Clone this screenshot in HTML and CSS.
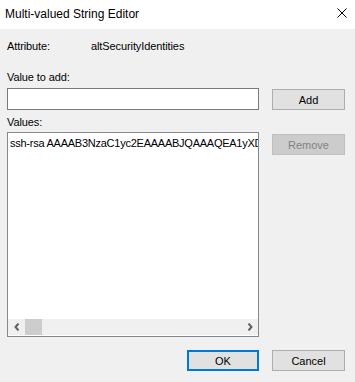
FILE: index.html
```html
<!DOCTYPE html>
<html lang="en">
  <head>
    <meta charset="UTF-8" />
    <title>Multi-valued String Editor</title>
    <link rel="stylesheet" href="styles.css">
  </head>
  <body>
    <div class="dialog" role="dialog" aria-label="Multi-valued String Editor">
      <header class="titlebar">
        <span class="title-text">Multi-valued String Editor</span>
        <button class="close-btn" type="button" aria-label="Close">
          <svg width="10" height="10" viewBox="0 0 10 10" aria-hidden="true">
            <path d="M0.5 0.5 L9.5 9.5 M9.5 0.5 L0.5 9.5" stroke="#000" stroke-width="1" fill="none" />
          </svg>
        </button>
      </header>

      <main class="content">
        <div class="attr-row">
          <span class="attr-label">Attribute:</span>
          <span class="attr-value">altSecurityIdentities</span>
        </div>

        <label class="field-label" for="value-input">Value to add:</label>
        <div class="edit-row">
          <input id="value-input" class="text-input" type="text" />
          <button class="btn add-btn" type="button">Add</button>
        </div>

        <div class="field-label values-label">Values:</div>
        <div class="edit-row values-row">
          <div class="listbox" role="listbox">
            <ul class="items">
              <li>ssh-rsa AAAAB3NzaC1yc2EAAAABJQAAAQEA1yXD</li>
            </ul>
            <!-- horizontal scrollbar -->
            <div class="hscroll" aria-hidden="true">
              <span class="arrow">
                <svg width="6" height="8" viewBox="0 0 6 8"><path d="M4.5 0.5 L1.5 4 L4.5 7.5" stroke="#606060" stroke-width="2" fill="none" /></svg>
              </span>
              <span class="thumb"></span>
              <span class="track"></span>
              <span class="arrow">
                <svg width="6" height="8" viewBox="0 0 6 8"><path d="M1.5 0.5 L4.5 4 L1.5 7.5" stroke="#606060" stroke-width="2" fill="none" /></svg>
              </span>
            </div>
          </div>
          <button class="btn remove-btn" type="button" disabled>Remove</button>
        </div>

        <div class="actions">
          <button class="btn ok-btn" type="button">OK</button>
          <button class="btn cancel-btn" type="button">Cancel</button>
        </div>
      </main>
    </div>
  </body>
</html>
```

FILE: styles.css
```css
/* Windows dialog look */
:root {
  --face: #f0f0f0;
  --btn-bg: #e1e1e1;
  --btn-border: #adadad;
  --field-border: #7a7a7a;
  --list-border: #828790;
  --accent: #0078d7;
}
* {
  box-sizing: border-box;
}
body {
  margin: 0;
  padding: 0;
  font-family: "Liberation Sans", Arial, sans-serif;
  font-size: 11px;
  letter-spacing: -0.1px;
  color: #000;
  background: var(--face);
}
.dialog {
  width: 355px;
  height: 382px;
  background: var(--face);
  overflow: hidden;
}

/* Title bar */
.titlebar {
  height: 29px;
  background: #fff;
  display: flex;
  align-items: center;
  padding-left: 5px;
}
.title-text {
  flex-grow: 1;
  font-size: 12px;
  letter-spacing: 0;
  padding-bottom: 2px;
}
.close-btn {
  background: none;
  border: none;
  width: 27px;
  height: 29px;
  padding: 0 0 3px 0;
  display: flex;
  align-items: center;
  justify-content: center;
}

/* Body */
.content {
  padding: 11px 10px 0 7px;
}
.attr-row {
  display: flex;
  height: 13px;
  line-height: 13px;
}
.attr-label {
  width: 84px;
}
.field-label {
  display: block;
  height: 13px;
  line-height: 13px;
  margin-top: 18px;
}
.values-label {
  margin-top: 6px;
}
.edit-row {
  display: flex;
  gap: 13px;
  align-items: flex-start;
  margin-top: 4px;
}
.values-row {
  margin-top: 3px;
}
.text-input {
  width: 252px;
  height: 22px;
  margin: 0;
  border: 1px solid var(--field-border);
  background: #fff;
  font: inherit;
  padding: 0 3px;
}

/* Buttons */
.btn {
  width: 73px;
  height: 21px;
  margin-top: 1px;
  padding: 0;
  font: inherit;
  color: #000;
  background: var(--btn-bg);
  border: 1px solid var(--btn-border);
  border-radius: 0;
}
.remove-btn {
  margin-top: 2px;
  background: #cccccc;
  border-color: #bfbfbf;
  color: #838383;
}

/* List box */
.listbox {
  width: 252px;
  height: 205px;
  border: 1px solid var(--list-border);
  background: #fff;
  display: flex;
  flex-direction: column;
  overflow: hidden;
}
.items {
  list-style: none;
  margin: 0;
  padding: 4px 0 0 2px;
  flex-grow: 1;
  overflow: hidden;
}
.items li {
  white-space: nowrap;
  overflow: hidden;
  height: 13px;
  line-height: 13px;
  letter-spacing: -0.25px;
}
.hscroll {
  height: 16px;
  margin-bottom: 1px;
  display: flex;
  background: var(--face);
}
.hscroll .arrow {
  width: 17px;
  display: flex;
  align-items: center;
  justify-content: center;
}
.hscroll .thumb {
  width: 17px;
  background: #cdcdcd;
}
.hscroll .track {
  flex-grow: 1;
}

/* Footer buttons */
.actions {
  display: flex;
  justify-content: flex-end;
  gap: 13px;
  margin-top: 12px;
}
.ok-btn {
  width: 72px;
  border: 2px solid var(--accent);
}
```
